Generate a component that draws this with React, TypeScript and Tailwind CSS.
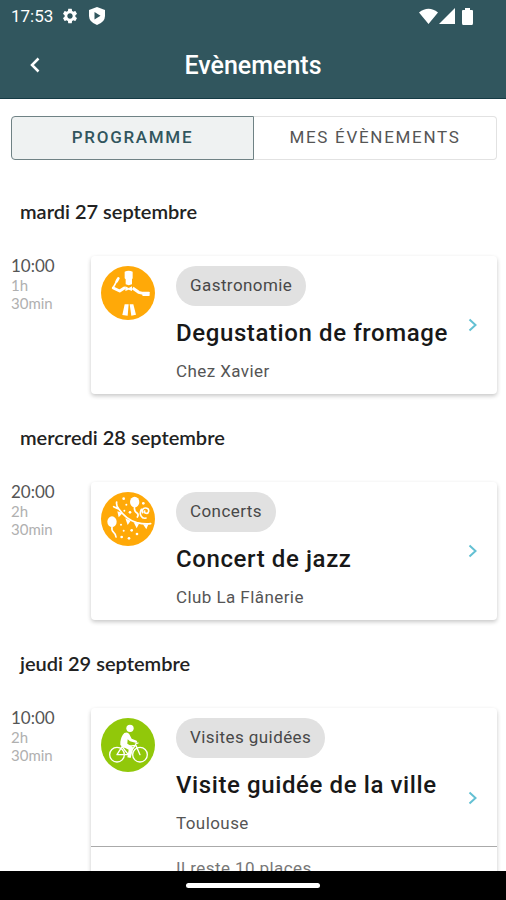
import { useState } from 'react';
import { MdSettings } from 'react-icons/md';

type Category = 'food' | 'party' | 'bike';

type EventItem = {
  id: number;
  date: string;
  time: string;
  duration: string[];
  category: Category;
  tag: string;
  title: string;
  place: string;
  remaining?: string;
};

const events: EventItem[] = [
  {
    id: 1,
    date: 'mardi 27 septembre',
    time: '10:00',
    duration: ['1h', '30min'],
    category: 'food',
    tag: 'Gastronomie',
    title: 'Degustation de fromage',
    place: 'Chez Xavier',
  },
  {
    id: 2,
    date: 'mercredi 28 septembre',
    time: '20:00',
    duration: ['2h', '30min'],
    category: 'party',
    tag: 'Concerts',
    title: 'Concert de jazz',
    place: 'Club La Flânerie',
  },
  {
    id: 3,
    date: 'jeudi 29 septembre',
    time: '10:00',
    duration: ['2h', '30min'],
    category: 'bike',
    tag: 'Visites guidées',
    title: 'Visite guidée de la ville',
    place: 'Toulouse',
    remaining: 'Il reste 10 places',
  },
];

function FoodIcon() {
  return (
    <svg viewBox="0 0 162 162" className="size-[54px]" aria-hidden="true">
      <circle cx="81" cy="81" r="81" fill="#ffa908" />
      <g fill="#fff">
        <path d="M71 17q12-6 24 0v20l-2 3v15q-10 5-19 0V40l-3-3z" />
        <path d="M73 61l10 5 10-5v14l-10-4-10 4z" />
        <path d="M71 115h12l-3 34-16-2zM86 115h11l8 31-14 3z" />
        <rect x="124" y="77" width="22" height="13" rx="2" />
      </g>
      <path d="M70 66L56 75 37 66" fill="none" stroke="#fff" strokeWidth="9" strokeLinecap="round" strokeLinejoin="round" />
      <path d="M37 64L50 40" fill="none" stroke="#fff" strokeWidth="5" strokeLinecap="round" />
      <path d="M47 46l5-9" fill="none" stroke="#fff" strokeWidth="8" strokeLinecap="round" />
      <path d="M95 66l18 13 16 4" fill="none" stroke="#fff" strokeWidth="9" strokeLinejoin="round" />
    </svg>
  );
}

function PartyIcon() {
  return (
    <svg viewBox="0 0 162 162" className="size-[54px]" aria-hidden="true">
      <circle cx="81" cy="81" r="81" fill="#ffa908" />
      <g fill="none" stroke="#fff" strokeWidth="5" strokeLinecap="round">
        <path d="M47 30q-2 12 6 20 22 32 54 42 22 5 42 3M38 44l16 8" />
        <path d="M101 44q-3 13 7 19 6 5 1 12" />
        <path d="M33 105q-2 10 5 16 6 5 7 14" />
        <path d="M125 62c-6-18 20-18 18-4-2 10-16 6-12-1M121 52c-8 16 2 30 14 26" />
      </g>
      <g fill="#fff">
        <ellipse cx="101" cy="30" rx="14" ry="16" />
        <ellipse cx="33" cy="89" rx="14" ry="16" />
        <path d="M49 58l16 5-12 13zM73 79l16 7-9 13zM98 91l16 4-7 14zM126 97h16l-6 15z" />
        <circle cx="68" cy="20" r="4" />
        <circle cx="76" cy="38" r="3" />
        <circle cx="70" cy="56" r="3" />
        <circle cx="87" cy="61" r="4" />
        <circle cx="127" cy="34" r="4" />
        <circle cx="60" cy="98" r="3" />
        <circle cx="68" cy="116" r="3" />
        <circle cx="92" cy="115" r="4" />
        <circle cx="62" cy="135" r="4" />
        <circle cx="84" cy="139" r="4" />
        <circle cx="108" cy="126" r="4" />
      </g>
    </svg>
  );
}

function BikeIcon() {
  return (
    <svg viewBox="0 0 162 162" className="size-[54px]" aria-hidden="true">
      <circle cx="81" cy="81" r="81" fill="#91c80a" />
      <g fill="none" stroke="#fff" strokeWidth="4" strokeLinejoin="round" strokeLinecap="round">
        <circle cx="48" cy="110" r="22" />
        <circle cx="117" cy="110" r="22" />
        <path d="M48 110l15-24 19 24H48zM82 110l21-28-38 5M117 110l-14-32 8-3" />
      </g>
      <circle cx="87" cy="31" r="11" fill="#fff" />
      <path
        d="M70 45q10-5 15 4l7 13 15 6q4 4-1 7l-19-5-7-6-1 13 15 9q4 3 2 8l-7 26-10-2 4-23-21-10q-6-4-4-13 2-17 12-27z"
        fill="#fff"
      />
    </svg>
  );
}

function CategoryIcon({ category }: { category: Category }) {
  if (category === 'food') return <FoodIcon />;
  if (category === 'party') return <PartyIcon />;
  return <BikeIcon />;
}

function StatusBar() {
  return (
    <div className="flex h-8 shrink-0 items-center justify-between pr-8 pl-[11px]">
      <div className="flex items-center">
        <span className="text-[17px] leading-5">17:53</span>
        <MdSettings className="ml-2 size-[18px]" />
        <svg viewBox="0 0 16 18" className="ml-2.5 h-[18px] w-4" aria-hidden="true">
          <path d="M8 0l8 3v6q0 6-8 9Q0 15 0 9V3z" fill="#fff" />
          <path d="M5.500 5v7.500L11.500 8.700z" fill="#31565e" />
        </svg>
      </div>
      <svg viewBox="0 0 55 17" className="h-[17px] w-[55px]" aria-hidden="true">
        <path d="M0 4.500Q9.500-3 19 4.500L9.500 16zM36 0v16H20zM46 0h5v2h2q1 0 1 1v12q0 2-1 2h-9q-1 0-1-2V3q0-1 1-1h2z" fill="#fff" />
      </svg>
    </div>
  );
}

function EventCard({ event }: { event: EventItem }) {
  return (
    <a
      href={`#event-${event.id}`}
      className="grid min-w-0 flex-1 grid-cols-[85px_minmax(0,1fr)_49px] rounded-sm bg-white shadow-[0_2px_4px_rgba(0,0,0,0.22)]"
    >
      <div className="col-start-1 row-start-1 pt-2.5 pl-2.5">
        <CategoryIcon category={event.category} />
      </div>
      <div className="col-start-2 row-start-1 flex h-[138px] flex-col items-start pt-2.5 whitespace-nowrap">
        <span className="flex h-10 items-center rounded-full bg-[#e1e1e1] px-3.5 text-[17px] tracking-wide text-[#484848]">
          {event.tag}
        </span>
        <h3 className="mt-[11px] text-2xl leading-8 font-medium tracking-wide text-[#181818]">{event.title}</h3>
        <p className="mt-2.5 text-[17px] leading-6 tracking-wide text-[#555]">{event.place}</p>
      </div>
      {event.remaining && (
        <div className="col-span-3 col-start-1 row-start-2 h-[42px] border-t border-[#aaa] pt-[9px] pl-[85px] text-[17px] leading-6 tracking-wide text-[#777]">
          {event.remaining}
        </div>
      )}
      <div className={`col-start-3 row-start-1 flex items-center justify-center ${event.remaining ? 'row-span-2' : ''}`}>
        <svg viewBox="0 0 9 14" className="h-3.5 w-[9px]" aria-hidden="true">
          <path d="M1.500 1.500L7.500 7l-6 5.500" fill="none" stroke="#63c0d3" strokeWidth="2" />
        </svg>
      </div>
    </a>
  );
}

export default function App() {
  const [tab, setTab] = useState<'programme' | 'mine'>('programme');

  const tabClass = (active: boolean) =>
    active
      ? 'border-[#6f8285] bg-[#eff2f2] text-[#31565e]'
      : 'border-[#e2e2e2] bg-white text-[#555]';

  return (
    <div className="flex h-screen flex-col overflow-hidden bg-white font-['Roboto',sans-serif]">
      <header className="shrink-0 border-b border-[#153b45] bg-[#31565e] text-white">
        <StatusBar />
        <div className="grid h-[66px] grid-cols-[70px_1fr_70px] items-center">
          <button type="button" aria-label="Retour" className="flex h-12 items-center justify-center">
            <svg viewBox="0 0 10 16" className="h-4 w-2.5" aria-hidden="true">
              <path d="M8.500 1.500L2 8l6.500 6.500" fill="none" stroke="#fff" strokeWidth="2.500" />
            </svg>
          </button>
          <h1 className="pt-0.5 text-center text-[25px] leading-8 font-medium">Evènements</h1>
        </div>
      </header>

      <main className="min-h-0 flex-1 overflow-hidden pr-[9px] pl-[11px]">
        <div role="tablist" className="mt-[17px] grid h-11 grid-cols-2 text-[17px] tracking-widest">
          <button
            type="button"
            role="tab"
            aria-selected={tab === 'programme'}
            onClick={() => setTab('programme')}
            className={`rounded-l-sm border font-medium ${tabClass(tab === 'programme')}`}
          >
            PROGRAMME
          </button>
          <button
            type="button"
            role="tab"
            aria-selected={tab === 'mine'}
            onClick={() => setTab('mine')}
            className={`rounded-r-sm border border-l-0 ${tabClass(tab === 'mine')}`}
          >
            MES ÉVÈNEMENTS
          </button>
        </div>

        <div className="pt-2">
          {events.map((event) => (
            <section key={event.id}>
              <h2 className="flex h-[88px] items-center pb-0.5 pl-[9px] font-['Lato',sans-serif] text-xl font-semibold text-[#222]">
                {event.date}
              </h2>
              <div className="flex">
                <div className="w-20 shrink-0 font-['Lato',sans-serif] text-[15px] leading-[18px] text-[#b0b0b0]">
                  <p className="text-[17px] leading-5 text-[#555]">{event.time}</p>
                  {event.duration.map((part) => (
                    <p key={part}>{part}</p>
                  ))}
                </div>
                <EventCard event={event} />
              </div>
            </section>
          ))}
        </div>
      </main>

      <footer className="flex h-[29px] shrink-0 items-center justify-center bg-black">
        <div className="h-[5px] w-[134px] rounded-full bg-white" />
      </footer>
    </div>
  );
}
